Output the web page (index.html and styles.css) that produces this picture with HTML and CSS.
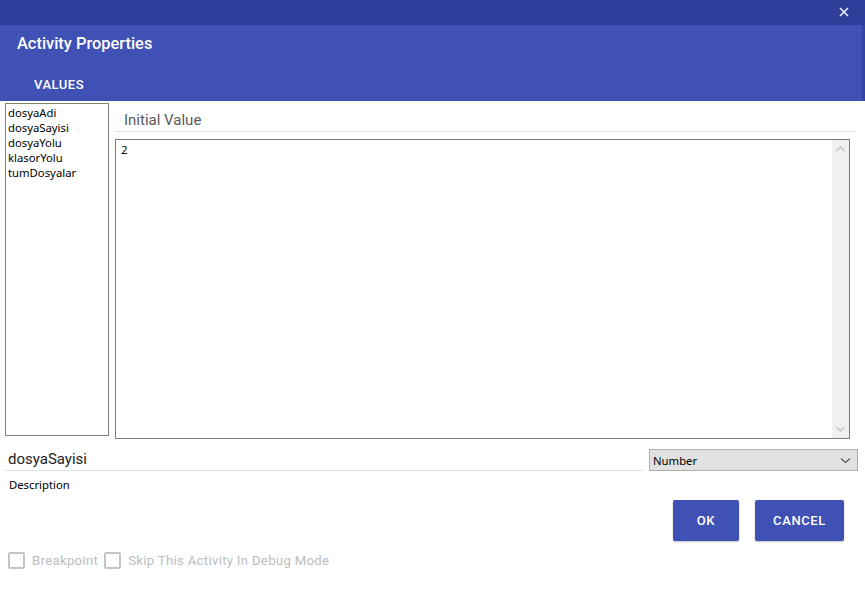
FILE: index.html
```html
<!DOCTYPE html>
<html>
<head>
<meta charset="utf-8">
<link rel="stylesheet" href="styles.css">
</head>
<body>
<div class="window">
  <div class="titlebar">
    <svg class="close" width="10" height="10" viewBox="0 0 10 10"><path d="M1 1 L9 9 M9 1 L1 9" stroke="#e8eaf6" stroke-width="1.6" fill="none"/></svg>
  </div>
  <div class="header">
    <div class="title">Activity Properties</div>
    <div class="tabs"><span class="tab">VALUES</span></div>
  </div>
  <div class="content">
    <div class="main-row">
      <div class="var-list">
        <div class="var-item">dosyaAdi</div>
        <div class="var-item">dosyaSayisi</div>
        <div class="var-item">dosyaYolu</div>
        <div class="var-item">klasorYolu</div>
        <div class="var-item">tumDosyalar</div>
      </div>
      <div class="value-panel">
        <div class="value-label">Initial Value</div>
        <div class="value-box">
          <div class="value-text">2</div>
          <div class="scrollbar">
            <svg class="arrow" width="11" height="8" viewBox="0 0 11 8"><path d="M1.5 6 L5.5 2 L9.5 6" fill="none" stroke="#c4c4c4" stroke-width="1.4"/></svg>
            <svg class="arrow" width="11" height="8" viewBox="0 0 11 8"><path d="M1.5 2 L5.5 6 L9.5 2" fill="none" stroke="#c4c4c4" stroke-width="1.4"/></svg>
          </div>
        </div>
      </div>
    </div>
    <div class="name-row">
      <div class="name-field">dosyaSayisi</div>
      <div class="type-select">
        <span>Number</span>
        <svg width="11" height="7" viewBox="0 0 11 7"><path d="M1 1.5 L5.5 5.5 L10 1.5" fill="none" stroke="#555" stroke-width="1.1"/></svg>
      </div>
    </div>
    <div class="description">Description</div>
    <div class="buttons">
      <button class="btn btn-ok">OK</button>
      <button class="btn btn-cancel">CANCEL</button>
    </div>
    <div class="checks">
      <label class="check"><span class="box"></span><span class="check-text">Breakpoint</span></label>
      <label class="check"><span class="box"></span><span class="check-text">Skip This Activity In Debug Mode</span></label>
    </div>
  </div>
</div>
</body>
</html>
```

FILE: styles.css
```css
html, body {
  margin: 0;
  padding: 0;
  background: #ffffff;
}

.window {
  width: 865px;
  height: 594px;
  display: flex;
  flex-direction: column;
  font-family: "Noto Sans", "Open Sans", sans-serif;
}

.titlebar {
  height: 25px;
  background: #2f3e9b;
  display: flex;
  justify-content: flex-end;
  align-items: center;
}

.close {
  display: block;
  margin-right: 16px;
  margin-bottom: 1px;
}

.header {
  height: 76px;
  background: #3f51b5;
  border-right: 3px solid #3544a3;
  display: flex;
  flex-direction: column;
  box-sizing: border-box;
  width: 865px;
}

.title {
  font-family: Roboto, sans-serif;
  font-weight: 500;
  font-size: 16.4px;
  color: #ffffff;
  padding-left: 17px;
  margin-top: 9px;
  height: 20px;
  line-height: 20px;
}

.tabs {
  margin-top: 18px;
  padding-left: 34px;
}

.tab {
  font-family: Roboto, sans-serif;
  font-weight: 500;
  font-size: 13px;
  color: #ffffff;
  letter-spacing: 0.5px;
  line-height: 18px;
}

.content {
  display: flex;
  flex-direction: column;
  padding-top: 2px;
}

.main-row {
  display: flex;
  align-items: flex-start;
}

.var-list {
  margin-left: 5px;
  width: 104px;
  height: 333px;
  box-sizing: border-box;
  border: 1px solid #828282;
  padding: 1px 0 0 2px;
  font-size: 11.3px;
  line-height: 15px;
  color: #000;
}

.var-item {
  white-space: nowrap;
}

.value-panel {
  margin-left: 6px;
  width: 741px;
  display: flex;
  flex-direction: column;
}

.value-label {
  font-family: Roboto, sans-serif;
  font-size: 15px;
  color: #5a5a5a;
  height: 28px;
  line-height: 34px;
  padding-left: 9px;
  border-bottom: 1px solid #e0e0e0;
}

.value-box {
  margin-top: 7px;
  width: 735px;
  height: 300px;
  box-sizing: border-box;
  border: 1px solid #7a7a7a;
  display: flex;
}

.value-text {
  flex: 1;
  font-size: 11.3px;
  padding: 2px 0 0 5px;
  color: #000;
}

.scrollbar {
  width: 17px;
  background: #f0f0f0;
  display: flex;
  flex-direction: column;
  justify-content: space-between;
  align-items: center;
  padding: 5px 0;
}

.arrow {
  display: block;
}

.name-row {
  display: flex;
  align-items: flex-start;
  margin-top: 9px;
}

.name-field {
  margin-left: 5px;
  width: 638px;
  height: 23px;
  box-sizing: border-box;
  border-bottom: 1px solid #e0e0e0;
  padding-left: 3px;
  font-family: Roboto, sans-serif;
  font-size: 15px;
  line-height: 22px;
  color: #222;
}

.type-select {
  margin-left: 6px;
  margin-top: 1px;
  width: 209px;
  height: 22px;
  box-sizing: border-box;
  background: #e1e1e1;
  border: 1px solid #adadad;
  display: flex;
  align-items: center;
  justify-content: space-between;
  padding: 0 6px 0 3px;
  font-size: 11.3px;
  color: #000;
}

.description {
  margin-left: 9px;
  margin-top: 6px;
  font-size: 11.3px;
  line-height: 16px;
  color: #000;
}

.buttons {
  display: flex;
  justify-content: flex-end;
  gap: 16px;
  margin-top: 7px;
  margin-right: 21px;
}

.btn {
  height: 41px;
  border: none;
  border-radius: 2px;
  background: #3f51b5;
  color: #ffffff;
  font-family: Roboto, sans-serif;
  font-weight: 500;
  font-size: 13px;
  letter-spacing: 0.6px;
  box-shadow: 0 1px 2px rgba(0,0,0,0.25);
  padding: 0;
}

.btn-ok {
  width: 66px;
}

.btn-cancel {
  width: 89px;
}

.checks {
  display: flex;
  align-items: center;
  margin-top: 11px;
  margin-left: 8px;
  gap: 6px;
}

.check {
  display: flex;
  align-items: center;
  gap: 7px;
}

.box {
  width: 17px;
  height: 17px;
  box-sizing: border-box;
  border: 2px solid #c4c4c4;
  border-radius: 2px;
}

.check-text {
  font-family: Roboto, sans-serif;
  font-size: 13.2px;
  color: #bdbdbd;
  letter-spacing: 0.3px;
}
```
